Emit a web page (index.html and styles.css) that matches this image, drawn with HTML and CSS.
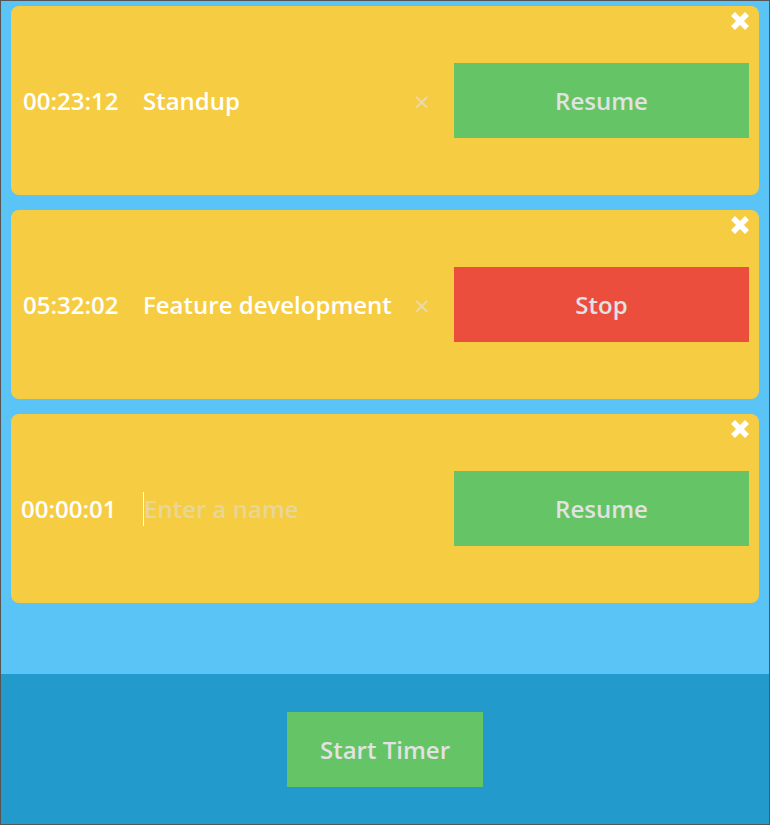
FILE: index.html
```html
<!DOCTYPE html>
<html>
<head>
<meta charset="utf-8">
<link rel="stylesheet" href="styles.css">
</head>
<body>
<div class="app">
  <main class="timers">
    <div class="card">
      <button class="close" aria-label="Delete"><svg viewBox="0 0 20 20" width="20" height="20"><path d="M3 3 L17 17 M17 3 L3 17" /></svg></button>
      <div class="time">00:23:12</div>
      <div class="name">Standup</div>
      <div class="clear">×</div>
      <button class="action resume">Resume</button>
    </div>
    <div class="card">
      <button class="close" aria-label="Delete"><svg viewBox="0 0 20 20" width="20" height="20"><path d="M3 3 L17 17 M17 3 L3 17" /></svg></button>
      <div class="time">05:32:02</div>
      <div class="name">Feature development</div>
      <div class="clear">×</div>
      <button class="action stop">Stop</button>
    </div>
    <div class="card">
      <button class="close" aria-label="Delete"><svg viewBox="0 0 20 20" width="20" height="20"><path d="M3 3 L17 17 M17 3 L3 17" /></svg></button>
      <div class="time time-narrow">00:00:01</div>
      <div class="name"><span class="input"><span class="placeholder">Enter a name</span></span></div>
      <div class="clear"></div>
      <button class="action resume">Resume</button>
    </div>
  </main>
  <footer class="footer">
    <button class="start">Start Timer</button>
  </footer>
</div>
</body>
</html>
```
FILE: styles.css
```css
* { box-sizing: border-box; }
html, body { margin: 0; padding: 0; }
body {
  font-family: "Open Sans", "Liberation Sans", sans-serif;
  background: #5bc4f7;
}
.app {
  width: 770px;
  height: 825px;
  border: 1px solid #555;
  display: flex;
  flex-direction: column;
  background: #5bc4f7;
}
.timers {
  flex: 1;
  display: flex;
  flex-direction: column;
  gap: 15px;
  padding: 5px 10px 0 10px;
}
.card {
  position: relative;
  height: 189px;
  background: #f6cd42;
  border-radius: 8px;
  display: flex;
  align-items: center;
  padding: 0 10px 0 12px;
}
.close {
  position: absolute;
  top: 5px;
  right: 9px;
  width: 20px;
  height: 20px;
  padding: 0;
  border: 0;
  background: none;
  line-height: 0;
}
.close svg path {
  stroke: #fff;
  stroke-width: 5.5;
  fill: none;
}
.time {
  width: 120px;
  flex: none;
  color: #fff;
  font-size: 24px;
  font-weight: 600;
}
.time-narrow { margin-left: -2px; margin-right: 2px; }
.name {
  flex: 1;
  color: #fff;
  font-size: 24px;
  font-weight: 600;
  white-space: nowrap;
}
.input {
  display: inline-block;
  border-left: 1px solid #fff;
  line-height: 34px;
}
.placeholder {
  color: #e9d694;
  font-weight: 600;
}
.clear {
  width: 36px;
  flex: none;
  text-align: center;
  color: #e9dba6;
  font-size: 28px;
  font-weight: 400;
  line-height: 1;
}
.action {
  flex: none;
  width: 295px;
  height: 75px;
  margin-left: 14px;
  border: 0;
  font-family: inherit;
  font-size: 24px;
  font-weight: 600;
  color: #e2e2e2;
}
.resume { background: #64c466; }
.stop { background: #eb4e3d; }
.footer {
  height: 150px;
  flex: none;
  background: #239acc;
  display: flex;
  align-items: center;
  justify-content: center;
}
.start {
  width: 196px;
  height: 75px;
  border: 0;
  background: #64c466;
  color: #e2e2e2;
  font-family: inherit;
  font-size: 24px;
  font-weight: 600;
}
```
